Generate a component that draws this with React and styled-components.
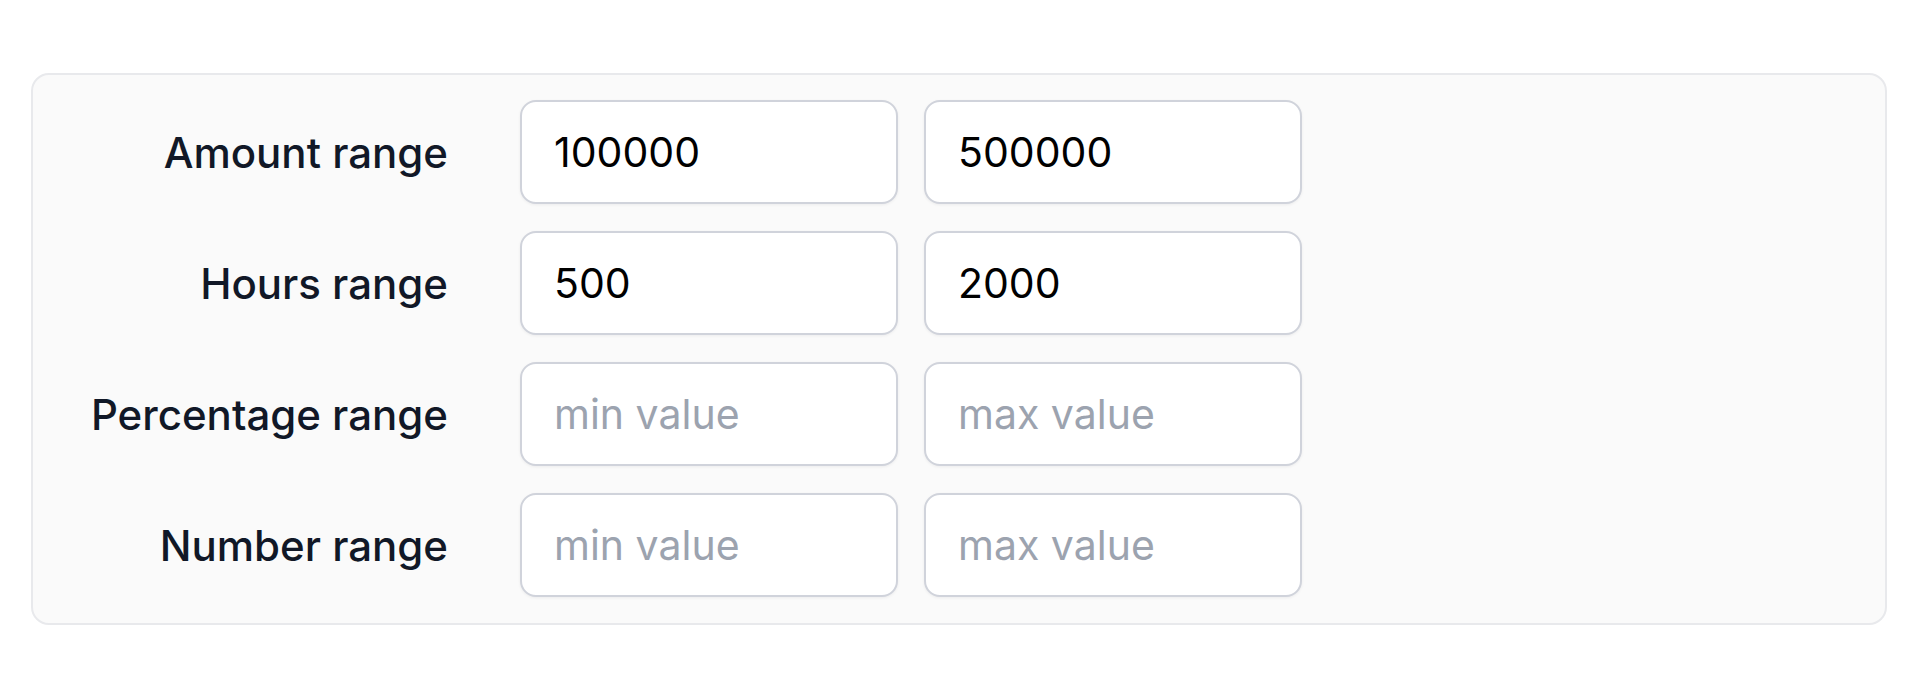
import React from "react";
import styled, { createGlobalStyle } from "styled-components";

const GlobalStyle = createGlobalStyle`
  html, body {
    margin: 0;
    padding: 0;
    background: #ffffff;
    font-family: "Inter", "Noto Sans", sans-serif;
  }
  * { box-sizing: border-box; }
`;

const Page = styled.div`
  padding: 73px 33px 0 31px;
`;

const Panel = styled.form`
  background: #fafafa;
  border: 2px solid #e8e9ec;
  border-radius: 18px;
  padding: 25px 0 26px 0;
  display: grid;
  grid-template-columns: 461px 378px 378px;
  column-gap: 26px;
  row-gap: 27px;
  align-items: center;
`;

const Row = styled.div`
  display: contents;
`;

const Label = styled.label`
  font-family: "Inter", sans-serif;
  font-weight: 500;
  font-size: 42px;
  color: #111827;
  text-align: right;
  margin-right: 46px;
  white-space: nowrap;
`;

const Field = styled.input`
  width: 100%;
  height: 104px;
  border: 2px solid #d0d3db;
  border-radius: 16px;
  background: #ffffff;
  padding: 0 32px;
  font-family: "Inter", sans-serif;
  font-size: 41px;
  color: #000000;
  box-shadow: 0 1px 3px rgba(17, 24, 39, 0.06);
  outline: none;

  &::placeholder {
    color: #9ca3af;
  }
`;

const rows = [
  { label: "Amount range", min: "100000", max: "500000" },
  { label: "Hours range", min: "500", max: "2000" },
  { label: "Percentage range", min: "", max: "" },
  { label: "Number range", min: "", max: "" },
];

export default function App() {
  return (
    <>
      <GlobalStyle />
      <Page>
        <Panel onSubmit={(e) => e.preventDefault()}>
          {rows.map((r) => (
            <Row key={r.label}>
              <Label>{r.label}</Label>
              <Field defaultValue={r.min} placeholder="min value" />
              <Field defaultValue={r.max} placeholder="max value" />
            </Row>
          ))}
        </Panel>
      </Page>
    </>
  );
}
